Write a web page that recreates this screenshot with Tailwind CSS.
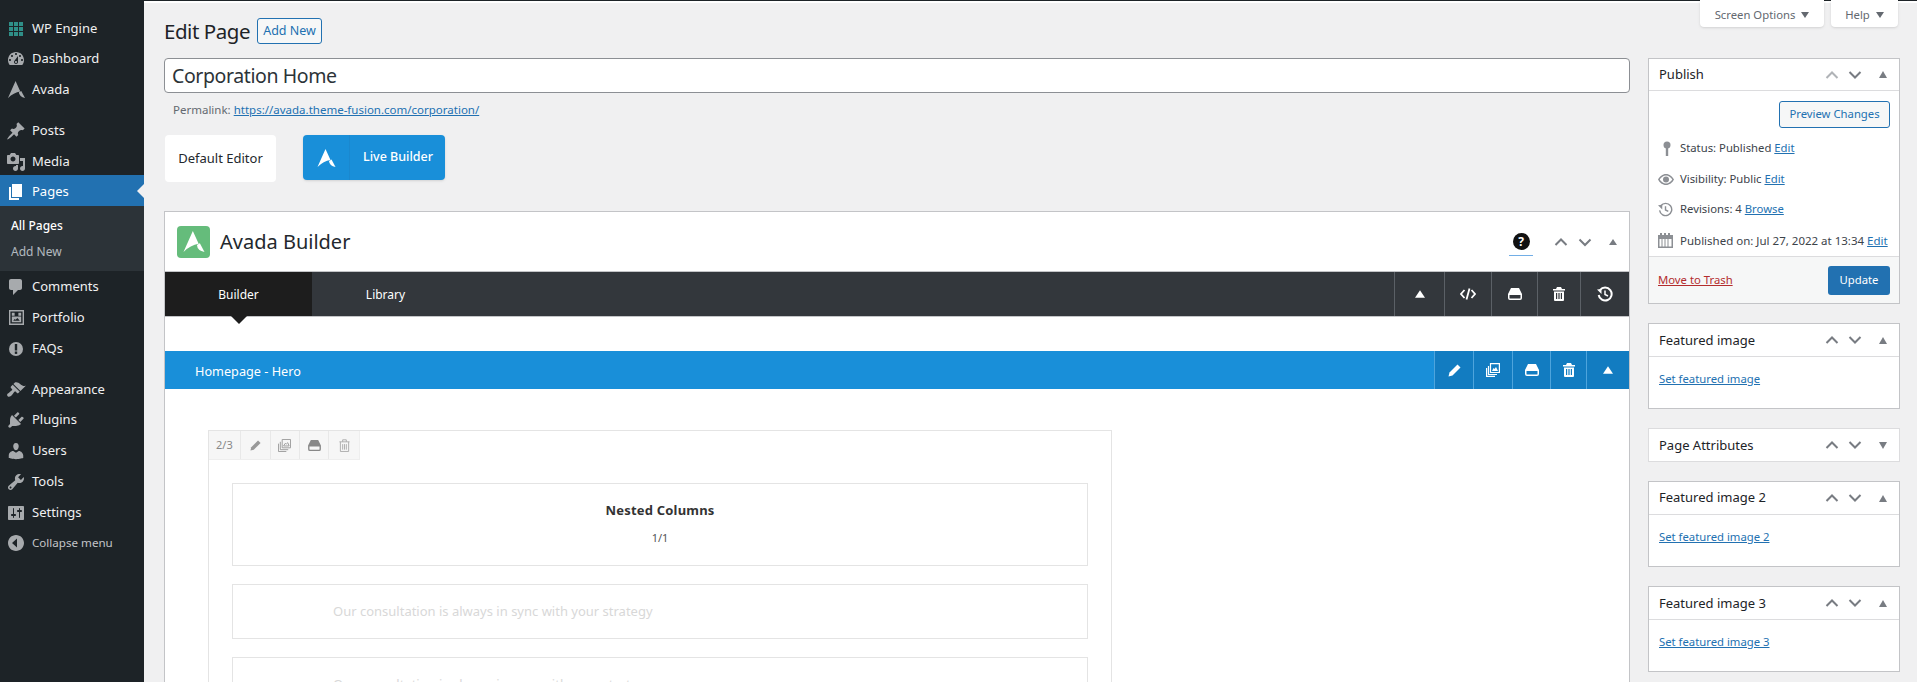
<!DOCTYPE html>
<html lang="en">
<head>
<meta charset="utf-8">
<title>Edit Page</title>
<script src="https://cdn.jsdelivr.net/npm/@tailwindcss/browser@4"></script>
</head>
<body class="m-0 bg-[#f0f0f1] font-['Noto_Sans','Open_Sans',sans-serif] text-[13px] text-[#3c434a] overflow-hidden">
<div class="flex h-[682px] w-[1917px] overflow-hidden">

<!-- Admin sidebar -->
<aside class="w-[144px] shrink-0 bg-[#1d2327] pt-[14px] text-[#f0f0f1] h-full">
  <div class="flex h-[30px] items-center"><span class="flex w-[32px] justify-center"><svg class="h-[14px] w-[14px]" viewBox="0 0 14 14" fill="#2f8f88"><path d="M0 0h4v4H0zM5 0h4v4H5zM10 0h4v4h-4zM0 5h4v4H0zM5 5h4v4H5zM10 5h4v4h-4zM0 10h4v4H0zM5 10h4v4H5zM10 10h4v4h-4z"/></svg></span><span>WP Engine</span></div>
  <div class="flex h-[30px] items-center"><span class="flex w-[32px] justify-center"><svg class="h-[20px] w-[20px]" viewBox="0 0 20 20" fill="#a7aaad"><path d="M3.76 16h12.48c1.1-1.37 1.76-3.11 1.76-5 0-4.42-3.58-8-8-8s-8 3.58-8 8c0 1.89.66 3.63 1.76 5zM10 4c.55 0 1 .45 1 1s-.45 1-1 1-1-.45-1-1 .45-1 1-1zM6 6c.55 0 1 .45 1 1s-.45 1-1 1-1-.45-1-1 .45-1 1-1zm8 0c.55 0 1 .45 1 1s-.45 1-1 1-1-.45-1-1 .45-1 1-1zm-5.37 5.55L12 7v6c0 1.1-.9 2-2 2s-2-.9-2-2c0-.57.24-1.08.63-1.45zM4 10c.55 0 1 .45 1 1s-.45 1-1 1-1-.45-1-1 .45-1 1-1zm12 0c.55 0 1 .45 1 1s-.45 1-1 1-1-.45-1-1 .45-1 1-1zm-5 3c0-.55-.45-1-1-1s-1 .45-1 1 .45 1 1 1 1-.45 1-1z"/></svg></span><span>Dashboard</span></div>
  <div class="flex h-[31px] items-center"><span class="flex w-[32px] justify-center"><svg class="h-[17px] w-[17px]" viewBox="0 0 18 18" fill="#a7aaad"><path d="M8 0 13 11Q6 12 0 18Z"/><path d="M11.500 12 14 10.500 18 18Q12 17 11.500 12Z"/></svg></span><span>Avada</span></div>
  <div class="h-[11px]"></div>
  <div class="flex h-[30px] items-center"><span class="flex w-[32px] justify-center"><svg class="h-[20px] w-[20px]" viewBox="0 0 20 20" fill="#a7aaad"><path d="M10.44 3.02l1.82-1.82 6.36 6.35-1.83 1.82c-1.05-.68-2.48-.57-3.41.36l-.75.75c-.92.93-1.04 2.35-.35 3.41l-1.83 1.82-2.41-2.41-2.8 2.79c-.42.42-3.38 2.71-3.8 2.29s1.86-3.39 2.28-3.81l2.79-2.79L4.1 9.36l1.83-1.82c1.05.69 2.48.57 3.4-.36l.75-.75c.93-.92 1.05-2.35.36-3.41z"/></svg></span><span>Posts</span></div>
  <div class="flex h-[29px] items-center pt-[2px]"><span class="flex w-[32px] justify-center"><svg class="h-[20px] w-[20px]" viewBox="0 0 20 20" fill="#a7aaad"><path d="M13 11V4c0-.55-.45-1-1-1h-1.67L9 1H5L3.67 3H2c-.55 0-1 .45-1 1v7c0 .55.45 1 1 1h10c.55 0 1-.45 1-1zM7 4.5c1.38 0 2.5 1.12 2.5 2.5S8.38 9.5 7 9.5 4.5 8.38 4.5 7 5.62 4.5 7 4.5zM14 6h5v10.5c0 1.38-1.12 2.5-2.5 2.5S14 17.88 14 16.5s1.12-2.5 2.5-2.5c.17 0 .34.02.5.05V9h-3V6zm-4 8.05V13h2v3.5c0 1.38-1.12 2.5-2.5 2.5S7 17.88 7 16.5 8.12 14 9.5 14c.17 0 .34.02.5.05z"/></svg></span><span>Media</span></div>
  <div class="relative flex h-[31px] items-center bg-[#2271b1] pt-[2px] text-white"><span class="flex w-[32px] justify-center"><svg class="h-[20px] w-[20px]" viewBox="0 0 20 20" fill="#fff"><path d="M6 15V2h10v13H6zm-1 1h8v2H3V5h2v11z"/></svg></span><span>Pages</span><span class="absolute right-0 top-[9px] h-0 w-0 border-y-[7px] border-r-[7px] border-y-transparent border-r-[#f0f0f1]"></span></div>
  <div class="h-[65px] bg-[#2c3338] pt-[7px] text-[12px]">
    <div class="flex h-[26px] items-center pl-[11px] font-medium text-white">All Pages</div>
    <div class="flex h-[25px] items-center pl-[11px] text-[#f0f6fc]/70">Add New</div>
  </div>
  <div class="flex h-[31px] items-center"><span class="flex w-[32px] justify-center"><svg class="h-[20px] w-[20px]" viewBox="0 0 20 20" fill="#a7aaad"><path d="M5 2h9c1.1 0 2 .9 2 2v7c0 1.1-.9 2-2 2h-2l-5 5v-5H5c-1.1 0-2-.9-2-2V4c0-1.1.9-2 2-2z"/></svg></span><span>Comments</span></div>
  <div class="flex h-[31px] items-center"><span class="flex w-[32px] justify-center"><svg class="h-[15px] w-[15px]" viewBox="0 0 16 16" fill="#a7aaad"><path fill-rule="evenodd" d="M0 0h16v16H0zM1.500 1.500v13h13v-13zM3 3h3v3H3zM10 3h3v3h-3zM3 7h10v6H3zM4.500 11.500h7l-2.500-3-2 2-1-1z"/></svg></span><span>Portfolio</span></div>
  <div class="flex h-[31px] items-center"><span class="flex w-[32px] justify-center"><svg class="h-[16px] w-[16px]" viewBox="0 0 16 16"><circle cx="8" cy="8" r="7" fill="#a7aaad"/><rect x="6.800" y="3" width="2.400" height="6.500" fill="#1d2327"/><rect x="6.800" y="10.500" width="2.400" height="2.400" fill="#1d2327"/></svg></span><span>FAQs</span></div>
  <div class="h-[10px]"></div>
  <div class="flex h-[31px] items-center"><span class="flex w-[32px] justify-center"><svg class="h-[20px] w-[20px]" viewBox="0 0 20 20" fill="#a7aaad"><path d="M14.48 11.06L7.41 3.99l1.5-1.5c.5-.56 2.3-.47 3.51.32 1.21.8 1.43 1.28 2.91 2.1 1.18.64 2.45 1.26 4.45.85zm-.71.71L6.7 4.7 4.93 6.47c-.39.39-.39 1.02 0 1.41l1.06 1.06c.39.39.39 1.03 0 1.42-.6.6-1.43 1.11-2.21 1.69-.35.26-.7.53-1.01.84C1.43 13.23.35 14.8 1.68 16.14c1.34 1.33 2.91.25 4.25-1.09.31-.31.58-.66.85-1.01.58-.78 1.09-1.61 1.69-2.21.39-.39 1.02-.39 1.41 0l1.06 1.06c.39.39 1.02.39 1.41 0z"/></svg></span><span>Appearance</span></div>
  <div class="flex h-[30px] items-center"><span class="flex w-[32px] justify-center"><svg class="h-[20px] w-[20px]" viewBox="0 0 20 20" fill="#a7aaad"><path d="M13.11 4.36L9.87 7.6 8 5.73l3.24-3.24c.35-.34 1.05-.2 1.56.32.52.51.66 1.21.31 1.55zm-8 1.77l.91-1.12 9.01 9.01-1.19.84c-.71.71-2.63 1.16-3.82 1.16H6.14L4.9 17.26c-.59.59-1.54.59-2.12 0-.59-.58-.59-1.53 0-2.12l1.24-1.24v-3.88c0-1.13.4-3.19 1.09-3.89zm7.26 3.97l3.24-3.24c.34-.35 1.04-.21 1.55.31.52.51.66 1.21.31 1.55l-3.24 3.25z"/></svg></span><span>Plugins</span></div>
  <div class="flex h-[31px] items-center"><span class="flex w-[32px] justify-center"><svg class="h-[20px] w-[20px]" viewBox="0 0 20 20" fill="#a7aaad"><path d="M10 9.25c-2.27 0-2.73-3.44-2.73-3.44C7 4.02 7.82 2 9.97 2c2.16 0 2.98 2.02 2.71 3.81 0 0-.41 3.44-2.68 3.44zm0 2.57L12.72 10c2.39 0 4.52 2.33 4.52 4.53v2.49s-3.65 1.13-7.24 1.13c-3.65 0-7.24-1.13-7.24-1.13v-2.49c0-2.25 1.94-4.48 4.47-4.48z"/></svg></span><span>Users</span></div>
  <div class="flex h-[31px] items-center"><span class="flex w-[32px] justify-center"><svg class="h-[20px] w-[20px]" viewBox="0 0 20 20" fill="#a7aaad"><path d="M16.68 9.77c-1.34 1.34-3.3 1.67-4.95.99l-5.41 6.52c-.99.99-2.59.99-3.58 0s-.99-2.59 0-3.57l6.52-5.42c-.68-1.65-.35-3.61.99-4.95 1.28-1.28 3.12-1.62 4.72-1.06l-2.89 2.89 2.82 2.82 2.86-2.87c.53 1.58.18 3.39-1.08 4.65zM3.81 16.21c.4.39 1.04.39 1.43 0 .4-.4.4-1.04 0-1.43-.39-.4-1.03-.4-1.43 0-.39.39-.39 1.03 0 1.43z"/></svg></span><span>Tools</span></div>
  <div class="flex h-[31px] items-center"><span class="flex w-[32px] justify-center"><svg class="h-[20px] w-[20px]" viewBox="0 0 20 20" fill="#a7aaad"><path d="M18 16V4c0-.55-.45-1-1-1H3c-.55 0-1 .45-1 1v12c0 .55.45 1 1 1h14c.55 0 1-.45 1-1zM8 11h1c.55 0 1 .45 1 1s-.45 1-1 1H8v1.5c0 .28-.22.5-.5.5s-.5-.22-.5-.5V13H6c-.55 0-1-.45-1-1s.45-1 1-1h1V5.5c0-.28.22-.5.5-.5s.5.22.5.5V11zm5-2h-1c-.55 0-1-.45-1-1s.45-1 1-1h1V5.5c0-.28.22-.5.5-.5s.5.22.5.5V7h1c.55 0 1 .45 1 1s-.45 1-1 1h-1v5.5c0 .28-.22.5-.5.5s-.5-.22-.5-.5V9z"/></svg></span><span>Settings</span></div>
  <div class="flex h-[30px] items-center text-[11.6px] text-[#c3c4c7]"><span class="flex w-[32px] justify-center"><svg class="h-[20px] w-[20px]" viewBox="0 0 20 20" fill="#a7aaad"><path d="M18 10c0-4.42-3.58-8-8-8s-8 3.58-8 8 3.58 8 8 8 8-3.58 8-8zM11 5.500v9L6 10z" fill-rule="evenodd"/></svg></span><span>Collapse menu</span></div>
</aside>

<!-- Main -->
<main class="flex min-w-0 flex-1 flex-col">
  <div class="h-[3px] shrink-0 border-t border-[#1d2327] bg-white"></div>
  <div class="flex flex-1 gap-[18px] pl-[20px] pr-[17px]">

    <!-- Left column -->
    <div class="w-[1466px] shrink-0">
      <div class="flex h-[55px] items-center pt-[1px]">
        <h1 class="text-[20.5px] leading-[29px] tracking-[-0.45px] text-[#1d2327]">Edit Page</h1>
        <a class="ml-[7px] flex h-[26px] w-[65px] items-center justify-center rounded-[3px] border border-[#2271b1] bg-[#f6f7f7] text-[12.5px] text-[#2271b1]">Add New</a>
      </div>
      <div class="flex h-[35px] items-center rounded-[4px] border border-[#8c8f94] bg-white pl-[7px] text-[19.5px] tracking-[-0.4px] text-[#2c3338]">Corporation Home</div>
      <div class="flex h-[32px] items-center pl-[9px] pt-[1px] text-[11.5px] text-[#646970]"><span>Permalink:</span><a class="ml-[3px] text-[#2271b1] underline">https://avada.theme-fusion.com/corporation/</a></div>
      <div class="flex h-[86px] items-start pt-[10px]">
        <div class="ml-[1px] flex h-[47px] w-[111px] items-center justify-center rounded-[4px] bg-white text-[#23282d]">Default Editor</div>
        <div class="ml-[27px] flex h-[45px] w-[142px] items-center rounded-[4px] bg-[#198fd9] text-[12.5px] font-medium text-white shadow-sm">
          <span class="flex h-full w-[47px] items-center justify-center border-r border-[#1a88cf]"><svg class="h-[18px] w-[19px]" viewBox="0 0 18 18" fill="#fff"><path d="M8 0 13 11Q6 12 0 18Z"/><path d="M11.500 12 14 10.500 18 18Q12 17 11.500 12Z"/></svg></span>
          <span class="ml-[13px]">Live Builder</span>
        </div>
      </div>

      <!-- Builder box -->
      <div class="h-[480px] border border-b-0 border-[#c3c4c7] bg-white">
        <div class="flex h-[60px] items-center border-b border-[#c3c4c7]">
          <span class="ml-[12px] flex h-[32px] w-[33px] items-center justify-center rounded-[4px] bg-[#65bc7b]"><svg class="h-[21px] w-[22px]" viewBox="0 0 18 18" fill="#fff"><path d="M8 0 13 11Q6 12 0 18Z"/><path d="M11.500 12 14 10.500 18 18Q12 17 11.500 12Z"/></svg></span>
          <span class="ml-[10px] text-[20px] text-[#23282d]">Avada Builder</span>
          <span class="ml-auto mr-[21px] flex h-[29px] w-[24px] items-start justify-center border-b border-[#72aee6] pt-[6px]"><span class="flex h-[17px] w-[17px] items-center justify-center rounded-full bg-[#111] text-[12px] font-bold leading-none text-white">?</span></span>
          <svg class="mr-[10px] h-[14px] w-[14px]" viewBox="0 0 14 14" fill="none" stroke="#787c82" stroke-width="2"><path d="M1.500 10 7 4.500 12.500 10"/></svg>
          <svg class="mr-[17px] h-[14px] w-[14px]" viewBox="0 0 14 14" fill="none" stroke="#787c82" stroke-width="2"><path d="M1.500 4.500 7 10 12.500 4.500"/></svg>
          <svg class="mr-[12px] h-[8px] w-[8px]" viewBox="0 0 8 8" fill="#787c82"><path d="M4 1 8 7H0z"/></svg>
        </div>
        <div class="flex h-[45px] items-stretch border-b border-[#c3c4c7] bg-[#33373c] text-[12px] text-white">
          <div class="relative flex w-[147px] items-center justify-center bg-[#1d1d1d] pt-[1px]">Builder<span class="absolute left-1/2 top-[44px] h-0 w-0 -translate-x-1/2 border-x-[8px] border-t-[8px] border-x-transparent border-t-[#1d1d1d]"></span></div>
          <div class="flex w-[147px] items-center justify-center pt-[1px]">Library</div>
          <div class="ml-auto flex">
            <span class="flex w-[50px] items-center justify-center border-l border-[#5b6066]"><svg class="h-[10px] w-[10px]" viewBox="0 0 8 8" fill="#fff"><path d="M4 1 8 7H0z"/></svg></span>
            <span class="flex w-[47px] items-center justify-center border-l border-[#5b6066]"><svg class="h-[14px] w-[16px]" viewBox="0 0 16 14" fill="none" stroke="#fff" stroke-width="1.800"><path d="M4.500 3 1 7l3.500 4M11.500 3 15 7l-3.500 4M9.500 1.500l-3 11"/></svg></span>
            <span class="flex w-[46px] items-center justify-center border-l border-[#5b6066]"><svg class="h-[12px] w-[14px]" viewBox="0 0 14 12" fill="#fff"><path fill-rule="evenodd" d="M3 0h8l3 6v4a2 2 0 0 1-2 2H2a2 2 0 0 1-2-2V6zM1.500 7v3a.5.5 0 0 0 .5.5h10a.5.5 0 0 0 .5-.5V7z"/></svg></span>
            <span class="flex w-[43px] items-center justify-center border-l border-[#5b6066]"><svg class="h-[14px] w-[12px]" viewBox="0 0 12 14" fill="#fff"><path fill-rule="evenodd" d="M4 0h4l1 2h3v1.500H0V2h3zM1 4.500h10V13a1 1 0 0 1-1 1H2a1 1 0 0 1-1-1zM3 6v6h1.200V6zM5.400 6v6h1.200V6zM7.800 6v6H9V6z"/></svg></span>
            <span class="flex w-[49px] items-center justify-center border-l border-[#5b6066]"><svg class="h-[16px] w-[16px]" viewBox="0 0 16 16" fill="none" stroke="#fff" stroke-width="2"><path d="M3 4a6.500 6.500 0 1 1-1.300 5"/><path d="M8 4.500V8.500l3 1.500" stroke-width="1.500"/><path d="M0 3.500 4.500 8V3z" fill="#fff" stroke="none"/></svg></span>
          </div>
        </div>

        <div class="h-[34px]"></div>

        <div class="flex h-[38px] items-stretch bg-[#198fd9] text-[12.7px] text-white">
          <span class="ml-[30px] self-center pt-[3px]">Homepage - Hero</span>
          <div class="ml-auto flex bg-[#127cc1]">
            <span class="flex w-[39px] items-center justify-center border-l border-[#4ea4dc]"><svg class="h-[13px] w-[13px]" viewBox="0 0 13 13" fill="#fff"><path d="M9.500.5 12.500 3.500 4.500 11.500 0.500 12.500 1.500 8.500z"/></svg></span>
            <span class="flex w-[39px] items-center justify-center border-l border-[#4ea4dc]"><svg class="h-[14px] w-[14px]" viewBox="0 0 14 14" fill="none" stroke="#fff" stroke-width="1.200"><path d="M4.500.6h8.900v8.900H4.500zM2.500 3v8.500H11M.6 5v8.400H9"/><path d="M6 8h6L10 4 8.500 6 7.500 5z" fill="#fff" stroke="none"/></svg></span>
            <span class="flex w-[38px] items-center justify-center border-l border-[#4ea4dc]"><svg class="h-[12px] w-[14px]" viewBox="0 0 14 12" fill="#fff"><path fill-rule="evenodd" d="M3 0h8l3 6v4a2 2 0 0 1-2 2H2a2 2 0 0 1-2-2V6zM1.500 7v3a.5.5 0 0 0 .5.5h10a.5.5 0 0 0 .5-.5V7z"/></svg></span>
            <span class="flex w-[36px] items-center justify-center border-l border-[#4ea4dc]"><svg class="h-[14px] w-[12px]" viewBox="0 0 12 14" fill="#fff"><path fill-rule="evenodd" d="M4 0h4l1 2h3v1.500H0V2h3zM1 4.500h10V13a1 1 0 0 1-1 1H2a1 1 0 0 1-1-1zM3 6v6h1.200V6zM5.400 6v6h1.200V6zM7.800 6v6H9V6z"/></svg></span>
            <span class="flex w-[43px] items-center justify-center border-l border-[#4ea4dc]"><svg class="h-[10px] w-[10px]" viewBox="0 0 8 8" fill="#fff"><path d="M4 1 8 7H0z"/></svg></span>
          </div>
        </div>

        <!-- Column -->
        <div class="ml-[43px] mt-[41px] h-[300px] w-[904px] border border-[#e4e4e4]">
          <div class="flex h-[29px] w-[151px] border-b border-r border-[#eee] bg-[#f6f6f6] text-[11px] text-[#888]">
            <span class="flex w-[32px] items-center justify-center border-r border-[#e8e8e8] pt-[1px]">2/3</span>
            <span class="flex w-[30px] items-center justify-center border-r border-[#e8e8e8]"><svg class="h-[11px] w-[11px]" viewBox="0 0 13 13" fill="#999"><path d="M9.500.5 12.500 3.500 4.500 11.500 0.500 12.500 1.500 8.500z"/></svg></span>
            <span class="flex w-[30px] items-center justify-center border-r border-[#e8e8e8]"><svg class="h-[13px] w-[13px]" viewBox="0 0 14 14" fill="none" stroke="#999"><path d="M4.500.5h9v9h-9zM2.500 3v8.500H11M.5 5v8.500H9M6 7.500l2-3 1 1 1.500-1.500 1.500 3.500z"/></svg></span>
            <span class="flex w-[29px] items-center justify-center border-r border-[#e8e8e8]"><svg class="h-[11px] w-[13px]" viewBox="0 0 14 12" fill="#888"><path fill-rule="evenodd" d="M3 0h8l3 6v4a2 2 0 0 1-2 2H2a2 2 0 0 1-2-2V6zM1.500 7v3a.5.5 0 0 0 .5.5h10a.5.5 0 0 0 .5-.5V7z"/></svg></span>
            <span class="flex w-[30px] items-center justify-center"><svg class="h-[13px] w-[11px]" viewBox="0 0 12 14" fill="none" stroke="#aaa"><path d="M.5 3h11M4 3V.8h4V3M1.500 3v10.500h9V3M4 5.500v6M6 5.500v6M8 5.500v6"/></svg></span>
          </div>
          <div class="mx-[23px] mt-[23px] flex h-[83px] flex-col items-center border border-[#e4e4e4] pt-[17px]">
            <span class="text-[13px] leading-[18px] font-bold tracking-[0.2px] text-[#333]">Nested Columns</span>
            <span class="mt-[12px] text-[11px] leading-[14px] text-[#555]">1/1</span>
          </div>
          <div class="mx-[23px] mt-[18px] flex h-[55px] items-center border border-[#e4e4e4] pl-[100px] text-[#d8d8d8]">Our consultation is always in sync with your strategy</div>
          <div class="mx-[23px] mt-[18px] flex h-[55px] items-start border border-[#e4e4e4] pl-[100px] pt-[17px] text-[#d8d8d8]">Our consultation is always in sync with your strategy</div>
        </div>
      </div>
    </div>

    <!-- Right column -->
    <div class="w-[252px] shrink-0 text-[11.3px]">
      <div class="-mt-[3px] flex h-[55px] items-start justify-end gap-[7px] pr-[2px]">
        <div class="flex h-[27px] w-[124px] items-center justify-center gap-[6px] rounded-b-[4px] bg-white pt-[3px] text-[#646970] shadow-sm">Screen Options <svg class="h-[6px] w-[8px]" viewBox="0 0 8 6" fill="#646970"><path d="M0 0h8L4 6z"/></svg></div>
        <div class="flex h-[27px] w-[67px] items-center justify-center gap-[6px] rounded-b-[4px] bg-white pt-[3px] text-[#646970] shadow-sm">Help <svg class="h-[6px] w-[8px]" viewBox="0 0 8 6" fill="#646970"><path d="M0 0h8L4 6z"/></svg></div>
      </div>
      <div class="h-[3px]"></div>

      <!-- Publish -->
      <section class="h-[246px] border border-[#c3c4c7] bg-white">
        <div class="flex h-[32px] items-center border-b border-[#dcdcde] pl-[10px] pr-[12px]">
          <span class="pt-[1px] text-[13px] text-[#1d2327]">Publish</span>
          <svg class="ml-auto h-[12px] w-[14px]" viewBox="0 0 14 12" fill="none" stroke="#b0b3b7" stroke-width="2"><path d="M1.500 9 7 3.500 12.500 9"/></svg>
          <svg class="ml-[9px] h-[12px] w-[14px]" viewBox="0 0 14 12" fill="none" stroke="#787c82" stroke-width="2"><path d="M1.500 3 7 8.500 12.500 3"/></svg>
          <svg class="ml-[17px] h-[7px] w-[8px]" viewBox="0 0 8 7" fill="#787c82"><path d="M4 0 8 7H0z"/></svg>
        </div>
        <div class="flex justify-end pr-[9px] pt-[10px]"><span class="flex h-[27px] w-[111px] items-center justify-center rounded-[3px] border border-[#2271b1] bg-[#f6f7f7] text-[#2271b1]">Preview Changes</span></div>
        <div class="mt-[5px] flex h-[31px] items-center pl-[9px]"><span class="flex w-[22px]"><svg class="ml-[2px] h-[15px] w-[14px]" viewBox="0 0 14 15" fill="#8c8f94"><circle cx="7" cy="4" r="3.500"/><rect x="5.800" y="6" width="2.400" height="9"/></svg></span><span>Status: Published <a class="text-[#2271b1] underline">Edit</a></span></div>
        <div class="flex h-[31px] items-center pl-[9px]"><span class="flex w-[22px]"><svg class="h-[11px] w-[16px]" viewBox="0 0 16 11" fill="#8c8f94"><path fill-rule="evenodd" d="M8 0c3.500 0 6.500 2.500 8 5.500C14.500 8.500 11.500 11 8 11S1.500 8.500 0 5.500C1.500 2.500 4.500 0 8 0zM8 1.500c-2.500 0-5 1.800-6.300 4 1.300 2.200 3.800 4 6.300 4s5-1.800 6.300-4c-1.300-2.200-3.800-4-6.300-4z"/><circle cx="8" cy="5.500" r="3"/></svg></span><span>Visibility: Public <a class="text-[#2271b1] underline">Edit</a></span></div>
        <div class="flex h-[30px] items-center pb-[1px] pl-[9px]"><span class="flex w-[22px]"><svg class="h-[15px] w-[15px]" viewBox="0 0 16 16" fill="none" stroke="#8c8f94" stroke-width="1.500"><path d="M3 4a6.500 6.500 0 1 1-1.300 5"/><path d="M8 4.500V8.500l3 1.500"/><path d="M0 3.500 4.500 8V3z" fill="#8c8f94" stroke="none"/></svg></span><span>Revisions: 4 <a class="text-[#2271b1] underline">Browse</a></span></div>
        <div class="flex h-[31px] items-center whitespace-nowrap pl-[9px] text-[11.5px]"><span class="flex w-[22px]"><svg class="h-[15px] w-[15px]" viewBox="0 0 15 15" fill="#8c8f94"><path fill-rule="evenodd" d="M0 2h2V0h2v2h2V0h2v2h2V0h2v2h3v13H0zM1.500 6v7.500h2V6zM4.500 6v7.500h2V6zM7.500 6v7.500h2V6zM10.500 6v7.500h3V6z"/></svg></span><span>Published on: Jul 27, 2022 at 13:34 <a class="text-[#2271b1] underline">Edit</a></span></div>
        <div class="flex h-[47px] items-center justify-between border-t border-[#dcdcde] bg-[#f6f7f7] pl-[9px] pr-[9px]">
          <a class="text-[#b32d2e] underline">Move to Trash</a>
          <span class="flex h-[29px] w-[62px] items-center justify-center rounded-[3px] bg-[#2271b1] text-white">Update</span>
        </div>
      </section>

      <!-- Featured image -->
      <section class="mt-[19px] h-[86px] border border-[#c3c4c7] bg-white">
        <div class="flex h-[33px] items-center border-b border-[#dcdcde] pl-[10px] pr-[12px]">
          <span class="pt-[2px] text-[13px] text-[#1d2327]">Featured image</span>
          <svg class="ml-auto h-[12px] w-[14px]" viewBox="0 0 14 12" fill="none" stroke="#787c82" stroke-width="2"><path d="M1.500 9 7 3.500 12.500 9"/></svg>
          <svg class="ml-[9px] h-[12px] w-[14px]" viewBox="0 0 14 12" fill="none" stroke="#787c82" stroke-width="2"><path d="M1.500 3 7 8.500 12.500 3"/></svg>
          <svg class="ml-[17px] h-[7px] w-[8px]" viewBox="0 0 8 7" fill="#787c82"><path d="M4 0 8 7H0z"/></svg>
        </div>
        <div class="pl-[10px] pt-[14px]"><a class="text-[#2271b1] underline">Set featured image</a></div>
      </section>

      <!-- Page Attributes -->
      <section class="mt-[19px] flex h-[34px] items-center border border-[#dcdcde] bg-white pl-[10px] pr-[12px]">
        <span class="pt-[2px] text-[13px] text-[#1d2327]">Page Attributes</span>
        <svg class="ml-auto h-[12px] w-[14px]" viewBox="0 0 14 12" fill="none" stroke="#787c82" stroke-width="2"><path d="M1.500 9 7 3.500 12.500 9"/></svg>
        <svg class="ml-[9px] h-[12px] w-[14px]" viewBox="0 0 14 12" fill="none" stroke="#787c82" stroke-width="2"><path d="M1.500 3 7 8.500 12.500 3"/></svg>
        <svg class="ml-[17px] h-[7px] w-[8px]" viewBox="0 0 8 7" fill="#787c82"><path d="M0 0h8L4 7z"/></svg>
      </section>

      <!-- Featured image 2 -->
      <section class="mt-[19px] h-[86px] border border-[#c3c4c7] bg-white">
        <div class="flex h-[33px] items-center border-b border-[#dcdcde] pl-[10px] pr-[12px]">
          <span class="text-[13px] text-[#1d2327]">Featured image 2</span>
          <svg class="ml-auto h-[12px] w-[14px]" viewBox="0 0 14 12" fill="none" stroke="#787c82" stroke-width="2"><path d="M1.500 9 7 3.500 12.500 9"/></svg>
          <svg class="ml-[9px] h-[12px] w-[14px]" viewBox="0 0 14 12" fill="none" stroke="#787c82" stroke-width="2"><path d="M1.500 3 7 8.500 12.500 3"/></svg>
          <svg class="ml-[17px] h-[7px] w-[8px]" viewBox="0 0 8 7" fill="#787c82"><path d="M4 0 8 7H0z"/></svg>
        </div>
        <div class="pl-[10px] pt-[14px]"><a class="text-[#2271b1] underline">Set featured image 2</a></div>
      </section>

      <!-- Featured image 3 -->
      <section class="mt-[19px] h-[86px] border border-[#c3c4c7] bg-white">
        <div class="flex h-[33px] items-center border-b border-[#dcdcde] pl-[10px] pr-[12px]">
          <span class="pt-[1px] text-[13px] text-[#1d2327]">Featured image 3</span>
          <svg class="ml-auto h-[12px] w-[14px]" viewBox="0 0 14 12" fill="none" stroke="#787c82" stroke-width="2"><path d="M1.500 9 7 3.500 12.500 9"/></svg>
          <svg class="ml-[9px] h-[12px] w-[14px]" viewBox="0 0 14 12" fill="none" stroke="#787c82" stroke-width="2"><path d="M1.500 3 7 8.500 12.500 3"/></svg>
          <svg class="ml-[17px] h-[7px] w-[8px]" viewBox="0 0 8 7" fill="#787c82"><path d="M4 0 8 7H0z"/></svg>
        </div>
        <div class="pl-[10px] pt-[14px]"><a class="text-[#2271b1] underline">Set featured image 3</a></div>
      </section>
    </div>
  </div>
</main>
</div>
</body>
</html>
